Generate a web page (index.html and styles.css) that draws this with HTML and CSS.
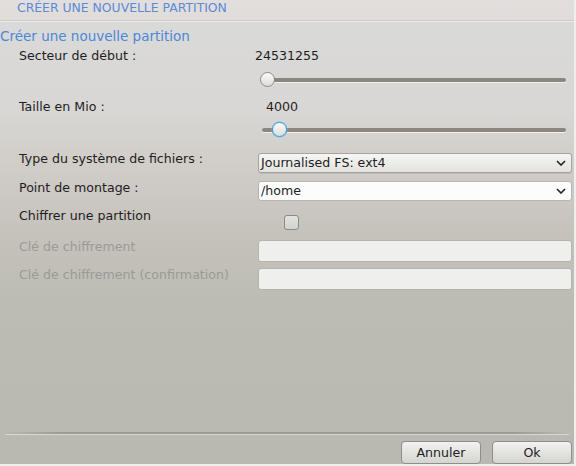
FILE: index.html
```html
<!DOCTYPE html>
<html lang="fr">
<head>
<meta charset="utf-8">
<link rel="stylesheet" href="styles.css">
</head>
<body>
<div class="window">
  <div class="header">CRÉER UNE NOUVELLE PARTITION</div>
  <div class="title">Créer une nouvelle partition</div>
  <div class="form">
    <div class="label row-a">Secteur de début :</div>
    <div class="value row-a v1">24531255</div>
    <div class="label row-s"></div>
    <div class="slider row-s"><div class="track"></div><div class="thumb t1"></div></div>

    <div class="label row-a second">Taille en Mio :</div>
    <div class="value row-a second v2">4000</div>
    <div class="label row-s"></div>
    <div class="slider row-s"><div class="track"></div><div class="thumb t2"></div></div>

    <div class="label row-c">Type du système de fichiers :</div>
    <div class="row-c field"><div class="combo grey"><span>Journalised FS: ext4</span><svg class="chev" width="10" height="6" viewBox="0 0 10 6"><path d="M1 1 L5 5 L9 1" fill="none" stroke="#222" stroke-width="1.6"/></svg></div></div>

    <div class="label row-c">Point de montage :</div>
    <div class="row-c field"><div class="combo white"><span>/home</span><svg class="chev" width="10" height="6" viewBox="0 0 10 6"><path d="M1 1 L5 5 L9 1" fill="none" stroke="#222" stroke-width="1.6"/></svg></div></div>

    <div class="label row-k">Chiffrer une partition</div>
    <div class="row-k field"><div class="check"></div></div>

    <div class="label row-i dis">Clé de chiffrement</div>
    <div class="row-i field"><div class="input"></div></div>

    <div class="label row-i dis">Clé de chiffrement (confirmation)</div>
    <div class="row-i field"><div class="input"></div></div>
  </div>
  <div class="spacer"></div>
  <div class="divider"></div>
  <div class="buttons">
    <div class="btn">Annuler</div>
    <div class="btn">Ok</div>
  </div>
</div>
</body>
</html>
```
FILE: styles.css
```css
* { box-sizing: border-box; }
html, body { margin: 0; padding: 0; }
body {
  width: 576px;
  height: 466px;
  overflow: hidden;
  font-family: "DejaVu Sans", sans-serif;
  font-size: 12.6px;
  color: #1e1e1e;
  background: #eeeeec;
}
.window {
  width: 574px;
  height: 464px;
  display: flex;
  flex-direction: column;
  background: linear-gradient(to bottom, #dadada 0px, #d8d7d5 110px, #d0ccc7 170px, #c6c2bc 230px, #bcbcb4 300px, #b9b9b1 466px);
}
.header {
  height: 22px;
  padding-left: 17px;
  padding-top: 1px;
  font-size: 12.4px;
  line-height: 14px;
  color: #5a8bd4;
  background: linear-gradient(to bottom, #e2dede, #dfdcd9);
  border-bottom: 1px solid #ecedea;
  box-shadow: 0 -1px 0 #c8cbc6 inset;
}
.title {
  height: 24px;
  font-size: 13.5px;
  line-height: 20px;
  padding-top: 4px;
  color: #4d87d7;
}
.form {
  display: grid;
  grid-template-columns: 239px 314px;
  padding-left: 19px;
}
.label { white-space: nowrap; }
.row-a { height: 24px; line-height: 20px; }
.row-a.second { padding-top: 1px; }
.row-s { height: 26px; }
.v1 { margin-left: -3px; }
.v2 { padding-left: 8px; }
.slider { position: relative; }
.track {
  position: absolute;
  left: 4px; right: 6px; top: 8px;
  height: 4px;
  border-radius: 2px;
  background: #8b8780;
  box-shadow: 0 1px 0 #f0f0ee;
}
.thumb {
  position: absolute;
  top: 2px;
  width: 15px; height: 15px;
  border-radius: 50%;
  background: linear-gradient(to bottom, #fbfbfa, #dcdcd9);
  border: 1px solid #8c8c88;
}
.t1 { left: 2px; }
.t2 { left: 14px; border-color: #3a9ee0; box-shadow: 0 0 0 0.5px #6fb8ea; }
.row-c { height: 28px; line-height: 20px; }
.row-c.label { padding-top: 3px; }
.row-c.label + .row-c.field { padding-top: 7px; }
.row-c.field + .row-c.label { padding-top: 4px; }
.combo {
  height: 20px;
  border-radius: 3px;
  border: 1px solid #a4a4a0;
  display: flex;
  align-items: center;
  justify-content: space-between;
  padding: 0 5px 0 2px;
  line-height: 18px;
}
.combo.grey { background: linear-gradient(to bottom, #f6f6f4, #e2e2de); box-shadow: 0 1px 0 #bdbab5; }
.combo.white { background: #fcfcfc; border-color: #b6b6b2; }
.row-k { height: 34px; line-height: 20px; padding-top: 4px; }
.row-k.field { padding-top: 13px; }
.check {
  margin-left: 26px;
  width: 15px; height: 15px;
  border-radius: 3px;
  background: linear-gradient(to bottom, #e2e2e0, #d2d2ce);
  border: 1px solid #8a8a86;
}
.row-i { height: 28px; line-height: 20px; padding-top: 1px; }
.row-i.field { padding-top: 4px; }
.dis { color: #9c9a96; }
.input {
  height: 22px;
  border-radius: 3px;
  border: 1px solid #b4b4b0;
  background: #eff0ee;
}
.spacer { flex: 1; }
.divider {
  margin: 0 5px 0 5px;
  height: 3px;
  background: linear-gradient(to right, #b9b9b1, #9c9c96 10%, #9c9c96 90%, #b9b9b1);
  border-bottom: 1px solid #d8d8d2;
}
.buttons {
  display: flex;
  justify-content: flex-end;
  gap: 11px;
  padding: 6px 2px 0 0;
  height: 29px;
}
.btn {
  width: 80px;
  height: 23px;
  border-radius: 4px;
  border: 1px solid #8e8e8a;
  background: linear-gradient(to bottom, #f2f2f0, #d4d4d0);
  text-align: center;
  line-height: 21px;
  color: #1e1e1e;
}
```
